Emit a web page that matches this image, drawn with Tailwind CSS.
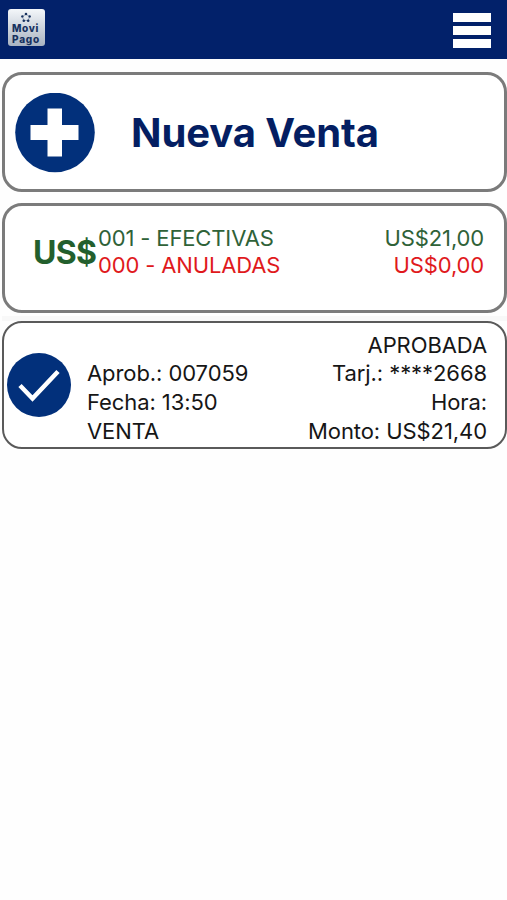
<!DOCTYPE html>
<html lang="es">
<head>
<meta charset="utf-8">
<meta name="viewport" content="width=device-width, initial-scale=1">
<title>Movi Pago</title>
<script src="https://cdn.jsdelivr.net/npm/@tailwindcss/browser@4"></script>
</head>
<body class="bg-[#fefefe] font-['Inter','Liberation_Sans',sans-serif] overflow-hidden">
<header class="flex h-[59px] items-start justify-between bg-[#02216a] pl-2 pr-4 pt-[9px]">
  <div class="flex h-[37px] w-[37px] flex-col items-start rounded-[3px] bg-linear-to-b from-[#f4f7fa] to-[#a9b3c1] pt-[3px] pl-[4px] text-[#17315f]">
    <svg class="ml-[8px] h-[11px] w-[12px] shrink-0" viewBox="0 0 12 12" fill="currentColor"><path d="M6 2.500L10 5L8.300 9.300H3.700L2 5z" fill="none" stroke="currentColor" stroke-width=".8" opacity=".5"/><circle cx="6" cy="2.200" r="1.400"/><circle cx="2" cy="4.800" r="1.300"/><circle cx="10" cy="4.800" r="1.300"/><circle cx="3.600" cy="9.500" r="1.400"/><circle cx="8.400" cy="9.500" r="1.400"/></svg>
    <span class="text-[10px] leading-[11px] font-extrabold tracking-[0.6px]">Movi</span>
    <span class="text-[10px] leading-[11px] font-extrabold tracking-[0.8px]">Pago</span>
  </div>
  <div class="mt-[4px] flex flex-col gap-[4px]">
    <div class="h-[9px] w-[38px] bg-white"></div>
    <div class="h-[9px] w-[38px] bg-white"></div>
    <div class="h-[9px] w-[38px] bg-white"></div>
  </div>
</header>
<main>
  <section class="mt-[13px] ml-[2px] flex h-[120px] items-center rounded-[20px] border-3 border-[#7b7b7b] bg-white pl-[10px]">
    <svg class="mt-px h-[80px] w-[80px] shrink-0" viewBox="0 0 80 80"><circle cx="40" cy="39.500" r="39.800" fill="#02307b"/><path d="M32.500 15.500h14.500v16.500h16.500v15H47v16.500H32.500V47H15.500v-15h17z" fill="#fff"/></svg>
    <h1 class="mt-px ml-[36px] text-[40px] leading-[48px] font-bold tracking-[-0.1px] whitespace-nowrap text-[#041e62]">Nueva Venta</h1>
  </section>
  <section class="mt-[11px] ml-[2px] flex h-[110px] items-start rounded-[20px] border-3 border-[#7b7b7b] bg-white pr-[20px] pl-[28px]">
    <div class="mt-[28px] w-[65px] text-[32px] leading-[38px] font-bold tracking-[-0.7px] whitespace-nowrap text-[#235f2d]">US$</div>
    <div class="mt-[19px] flex grow justify-between text-[22px] leading-[27px] tracking-[-0.14px] whitespace-nowrap">
      <div><p class="text-[#2f6238]">001 - EFECTIVAS</p><p class="text-[#e0191c]">000 - ANULADAS</p></div>
      <div class="text-right"><p class="text-[#2f6238]">US$21,00</p><p class="text-[#e0191c]">US$0,00</p></div>
    </div>
  </section>
  <div class="ml-[2px] h-[8px] border-b-[5px] border-[#f8f8f8] bg-[#fefefe]"></div>
  <section class="ml-[2px] flex h-[128px] items-start rounded-[20px] border-2 border-[#5a5a5a] bg-white pr-[18px] pl-[3px]">
    <svg class="mt-[30px] h-[64px] w-[64px] shrink-0" viewBox="0 0 64 64"><circle cx="32" cy="32" r="32" fill="#02307b"/><path d="M13 32.500L25.500 45.500L51 18.500" fill="none" stroke="#fff" stroke-width="4.500"/></svg>
    <div class="mt-[7.6px] ml-[16px] flex grow justify-between text-[22px] leading-[28.700px] tracking-[-0.08px] whitespace-nowrap text-[#161616]">
      <div class="pt-[28.700px]"><p>Aprob.: 007059</p><p>Fecha: 13:50</p><p>VENTA</p></div>
      <div class="text-right"><p>APROBADA</p><p>Tarj.: ****2668</p><p>Hora:</p><p>Monto: US$21,40</p></div>
    </div>
  </section>
</main>
</body>
</html>
